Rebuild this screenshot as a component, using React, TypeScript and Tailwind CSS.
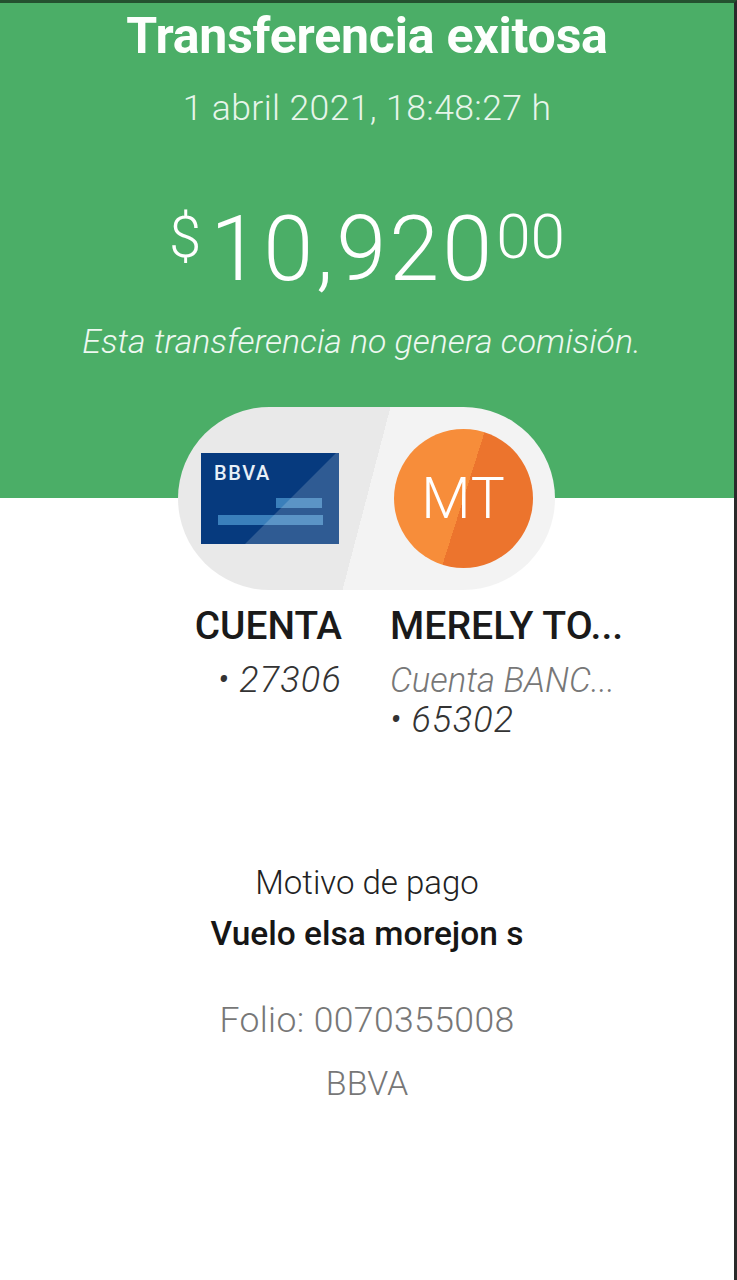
export default function App() {
  const font = { fontFamily: 'Roboto, "Liberation Sans", sans-serif' };
  return (
    <div className="relative w-[737px] h-[1280px] bg-white overflow-hidden flex flex-col items-stretch border-t-[3px] border-t-[#24512f] border-r-[3px] border-r-[#2a2a2a]" style={font}>
      <header className="h-[495px] bg-[#4bae67] text-white flex flex-col items-center shrink-0">
        <h1 className="mt-[5px] text-[50px] leading-[56px] font-bold tracking-[-0.2px] whitespace-nowrap text-[#fdfffd]">Transferencia exitosa</h1>
        <p className="mt-[24px] text-[35.5px] leading-[40px] font-light tracking-[0.4px] text-[#e6f5ea]">1 abril 2021, 18:48:27 h</p>
        <div className="mt-[80px] h-[90px] flex items-start font-light leading-none">
          <span className="text-[58px] mr-[9px]">$</span>
          <span className="text-[90px] mt-[-3px] tracking-[3px] mr-[1px]">10,920</span>
          <span className="text-[62px] mt-[-2px]">00</span>
        </div>
        <p className="mt-[24px] ml-[-11px] text-[33.8px] leading-[40px] italic font-light text-[#eef8f1] whitespace-nowrap">Esta transferencia no genera comisión.</p>
      </header>

      <div className="relative self-start ml-[178px] mt-[-91px] w-[377px] h-[183px] rounded-full bg-[linear-gradient(104.7deg,#e9e9e9_50%,#f3f3f3_50%)] flex items-center shrink-0">
        <svg className="ml-[23px] shrink-0" width="138" height="91" viewBox="0 0 138 91" aria-label="BBVA">
          <rect width="138" height="91" fill="#063a7e" />
          <rect x="75" y="45" width="46" height="10" fill="#3a7fbb" />
          <rect x="17" y="62" width="105" height="10" fill="#3a7fbb" />
          <polygon points="135,0 138,0 138,91 44,91" fill="#ffffff" fillOpacity="0.17" />
          <text x="13" y="27" fill="#e8f0f8" fontSize="20" fontWeight="500" fontFamily="Roboto, sans-serif" letterSpacing="1.6">BBVA</text>
        </svg>
        <div className="ml-[55px] w-[139px] h-[139px] rounded-full bg-[linear-gradient(107.6deg,#f78d3a_50%,#ec742d_50%)] flex items-center justify-center shrink-0">
          <span className="text-[57px] font-light text-white leading-none tracking-[1px]">MT</span>
        </div>
      </div>

      <section className="flex mt-[14px] ml-[194px] items-start text-[#1a1a1a]">
        <div className="w-[148px] flex flex-col items-end">
          <div className="text-[38.8px] leading-[44px] font-medium whitespace-nowrap">CUENTA</div>
          <div className="mt-[12px] text-[36px] leading-[40px] italic font-light tracking-[1.2px] text-[#333] whitespace-nowrap flex gap-[9px]">
            <span>•</span>
            <span>27306</span>
          </div>
        </div>
        <div className="ml-[48px] flex flex-col items-start">
          <div className="text-[39.2px] leading-[44px] font-medium whitespace-nowrap">MERELY TO...</div>
          <div className="mt-[12px] text-[34.7px] leading-[40px] italic font-light text-[#777] whitespace-nowrap">Cuenta BANC...</div>
          <div className="text-[36px] leading-[40px] italic font-light tracking-[1.2px] text-[#333] whitespace-nowrap flex gap-[9px]">
            <span>•</span>
            <span>65302</span>
          </div>
        </div>
      </section>

      <section className="mt-[123px] flex flex-col items-center">
        <div className="text-[33px] leading-[40px] font-light text-[#222]">Motivo de pago</div>
        <div className="mt-[11px] text-[33.5px] leading-[40px] font-medium text-[#161616] whitespace-nowrap">Vuelo elsa morejon s</div>
        <div className="mt-[46px] text-[35.5px] leading-[40px] font-light text-[#777] tracking-[0.4px]">Folio: 0070355008</div>
        <div className="mt-[23px] text-[34px] leading-[40px] font-light text-[#777]">BBVA</div>
      </section>
    </div>
  );
}
